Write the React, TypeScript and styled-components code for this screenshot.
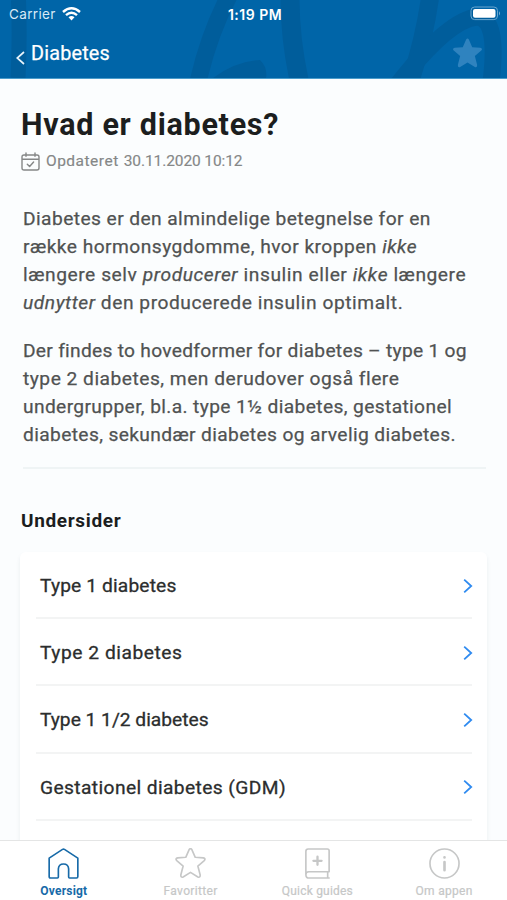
import React from "react";
import styled, { createGlobalStyle, css } from "styled-components";

const GlobalStyle = createGlobalStyle`
  html, body { margin: 0; padding: 0; background: #fbfdfe; }
  *, *::before, *::after { box-sizing: border-box; }
`;

const Screen = styled.div`
  width: 507px;
  height: 900px;
  display: flex;
  flex-direction: column;
  overflow: hidden;
  background: #fbfdfe;
  font-family: Roboto, "Noto Sans", sans-serif;
`;

const Header = styled.header`
  position: relative;
  flex: none;
  height: 79px;
  background: #0065a8;
  border-bottom: 1px solid #4a9ccb;
  color: #fff;
`;

const Pattern = styled.svg`
  position: absolute;
  inset: 0;
`;

const StatusBar = styled.div`
  position: relative;
  display: grid;
  grid-template-columns: 1fr auto 1fr;
  align-items: center;
  height: 28px;
  padding: 0 6px 0 9px;
  font-family: Inter, sans-serif;
  font-size: 13.5px;
`;

const Carrier = styled.div`
  display: flex;
  align-items: center;
  gap: 6px;
  color: #d8eaf6;
  letter-spacing: 0.35px;
`;

const Clock = styled.div`
  font-weight: 600;
  font-size: 14px;
  letter-spacing: 0.5px;
`;

const Battery = styled.svg`
  justify-self: end;
  margin-top: -2px;
`;

const NavBar = styled.div`
  position: relative;
  display: flex;
  align-items: center;
  height: 50px;
  padding: 0 24px 0 16px;
`;

const BackIcon = styled.svg`
  margin-top: 10px;
`;

const NavTitle = styled.div`
  flex: 1;
  margin: 0 0 0 6px;
  font-size: 19.8px;
  letter-spacing: 0.2px;
  -webkit-text-stroke: 0.25px currentColor;
`;

const Content = styled.main`
  flex: 1;
  min-height: 0;
  overflow: hidden;
  padding: 28px 20px 0;
`;

const Line = styled.span<{ $spacing: number }>`
  display: block;
  white-space: nowrap;
  letter-spacing: ${(p) => p.$spacing}px;
`;

const Title = styled.h1`
  margin: 0 0 0 1px;
  font-size: 30.5px;
  line-height: 36px;
  font-weight: 700;
  letter-spacing: 0.72px;
  color: #1c1e1e;
`;

const Updated = styled.div`
  display: flex;
  align-items: center;
  height: 20px;
  margin: 8px 0 0 1px;
  font-size: 15.5px;
  color: #858787;
  -webkit-text-stroke: 0.15px currentColor;
`;

const UpdatedLabel = styled.span`
  margin: 0 5px 0 6px;
  letter-spacing: 0.5px;
`;

const Article = styled.div`
  margin: 34px 1px 0 3px;
  padding-bottom: 18px;
  border-bottom: 2px solid #eff4f5;
`;

const Paragraph = styled.p`
  margin: 0;
  font-size: 19.2px;
  line-height: 28px;
  color: #505252;
  -webkit-text-stroke: 0.25px currentColor;
  & + & { margin-top: 20px; }
`;

const SectionTitle = styled.h2`
  margin: 40px 0 0 1px;
  font-size: 19px;
  line-height: 24px;
  font-weight: 700;
  letter-spacing: 0.65px;
  color: #1c1e1e;
`;

const Card = styled.div`
  height: 340px;
  margin-top: 19px;
  padding: 0 15px 0 16px;
  border-radius: 6px;
  background: #fff;
  box-shadow: 0 3px 4px rgba(40, 70, 90, 0.08);
`;

const Row = styled.div`
  display: flex;
  align-items: center;
  justify-content: space-between;
  height: 67.2px;
  padding: 2px 0 0 4px;
  border-bottom: 2px solid #f3f4f4;
  font-size: 19.2px;
  color: #2b2d2d;
  -webkit-text-stroke: 0.3px currentColor;
`;

const Chevron = styled.svg`
  margin-right: -1px;
`;

const TabBar = styled.nav`
  flex: none;
  display: grid;
  grid-template-columns: repeat(4, 1fr);
  height: 60px;
  padding-top: 7px;
  border-top: 1px solid #e4e5e5;
  background: #fff;
`;

const Tab = styled.div<{ $active?: boolean; $spacing: number }>`
  display: flex;
  flex-direction: column;
  align-items: center;
  gap: 4px;
  padding-left: 1px;
  color: #c6c7c7;
  font-size: 12px;
  line-height: 14px;
  letter-spacing: ${(p) => p.$spacing}px;
  -webkit-text-stroke: 0.2px currentColor;
  ${(p) => p.$active && css`
    color: #176aa8;
    font-weight: 700;
    -webkit-text-stroke: 0;
  `}
`;

const Glyph = styled.svg`
  display: block;
  fill: none;
  stroke: currentColor;
  stroke-width: 1.7;
  stroke-linejoin: round;
  stroke-linecap: round;
`;

const TabGlyph = styled(Glyph)`
  height: 31px;
  width: 31px;
  margin-bottom: 1px;
`;

const starPath =
  "M14.6 1.6Q16 -0.4 17.4 1.6L20.9 9.6L29.2 10.2Q32 10.8 30.2 13L23.6 18.6L26 27.8Q26 31 23.6 29.9L16 25.2L8.4 29.9Q6 31 6 27.8L8.4 18.6L1.8 13Q0 10.8 2.8 10.2L11.1 9.6Z";

const pages = [
  { name: "Type 1 diabetes", spacing: 0.14 },
  { name: "Type 2 diabetes", spacing: 0.54 },
  { name: "Type 1 1/2 diabetes", spacing: 0 },
  { name: "Gestationel diabetes (GDM)", spacing: 0.4 },
];

const tabs = [
  {
    label: "Oversigt",
    spacing: 0.2,
    active: true,
    icon: <path d="M1.2 10.5L15 1.4Q16 0.8 17 1.4L30.8 10.5V29.5Q30.8 31 29.5 31H22.3Q21.3 31 21.3 30V21.5Q21 16.5 16 16.5T10.7 21.5V30Q10.7 31 9.7 31H2.5Q1.2 31 1.2 29.5Z" />,
  },
  { label: "Favoritter", spacing: 0.35, icon: <path d={starPath} /> },
  {
    label: "Quick guides",
    spacing: 0.2,
    icon: (
      <>
        <path d="M28 24.5V2.8Q28 1 26.2 1H6.3Q4 1 4 3.5V27.5Q4 31 7.5 31H28M4 27.5Q4 24.5 7 24.5H28M26.5 24.5V31" />
        <path d="M16 9V17.4M11.8 13.2H20.2" strokeWidth="2.4" />
      </>
    ),
  },
  {
    label: "Om appen",
    spacing: 0.3,
    icon: (
      <>
        <circle cx="16" cy="16" r="15" />
        <path d="M16 14.5V23M16 9.5V9.7" strokeWidth="2.7" />
      </>
    ),
  },
];

export default function App() {
  return (
    <Screen>
      <GlobalStyle />
      <Header>
        <Pattern width="507" height="78" viewBox="0 0 507 78" fill="none" stroke="#005d9b">
          <path d="M18.5 0Q20 40 18 78" strokeWidth="15" />
          <path d="M229 -4Q209 34 198 82" strokeWidth="17" />
          <path d="M213 78Q236 61 260 60Q268 68 266 78Z" fill="#005d9b" stroke="none" />
          <path d="M290 -2Q290 38 299 80" strokeWidth="19" />
          <path d="M430 -2Q424 40 410 82" strokeWidth="18" />
          <path d="M398 84Q448 20 477 17Q499 18 491 82" strokeWidth="17" />
        </Pattern>
        <StatusBar>
          <Carrier>
            Carrier
            <svg width="19" height="14" viewBox="0 0 19 14" fill="none" stroke="#fff" strokeWidth="2.4">
              <path d="M1 5Q9.5 -2.5 18 5M4 8.2Q9.5 3.3 15 8.2" />
              <path d="M6.5 10.2Q9.5 7.6 12.5 10.2L9.5 13.5Z" fill="#fff" stroke="none" />
            </svg>
          </Carrier>
          <Clock>1:19 PM</Clock>
          <Battery width="31" height="15" viewBox="0 0 31 15">
            <rect x="1" y="1" width="26.5" height="12.6" rx="3.6" fill="none" stroke="#69a6cf" strokeWidth="1" />
            <rect x="3" y="3" width="22.5" height="8.8" rx="2" fill="#fff" />
            <path d="M29 5.2Q31 7.3 29 9.4Z" fill="#78afd4" />
          </Battery>
        </StatusBar>
        <NavBar>
          <BackIcon width="9" height="14" viewBox="0 0 9 14" fill="none" stroke="#e8f4fb" strokeWidth="1.7">
            <path d="M8 1L1.2 7L8 13" />
          </BackIcon>
          <NavTitle>Diabetes</NavTitle>
          <svg width="31" height="30" viewBox="0 0 32 31" fill="#2f83bf">
            <path d={starPath} />
          </svg>
        </NavBar>
      </Header>
      <Content>
        <Title>Hvad er diabetes?</Title>
        <Updated>
          <Glyph width="19" height="19" viewBox="0 0 19 19">
            <path d="M1 5Q1 3 3 3H16Q18 3 18 5V16Q18 18 16 18H3Q1 18 1 16ZM1 7.3H18M5 1V4.3M14 1V4.3M6.3 12.2L8.6 14.5L12.6 10" strokeWidth="1.4" />
          </Glyph>
          <UpdatedLabel>Opdateret</UpdatedLabel>
          <Line $spacing={-0.1}>30.11.2020 10:12</Line>
        </Updated>
        <Article>
          <Paragraph>
            <Line $spacing={0.42}>Diabetes er den almindelige betegnelse for en</Line>
            <Line $spacing={0.46}>række hormonsygdomme, hvor kroppen <em>ikke</em></Line>
            <Line $spacing={0.56}>længere selv <em>producerer</em> insulin eller <em>ikke</em> længere</Line>
            <Line $spacing={0.54}><em>udnytter</em> den producerede insulin optimalt.</Line>
          </Paragraph>
          <Paragraph>
            <Line $spacing={0.28}>Der findes to hovedformer for diabetes – type 1 og</Line>
            <Line $spacing={0.5}>type 2 diabetes, men derudover også flere</Line>
            <Line $spacing={0.37}>undergrupper, bl.a. type 1½ diabetes, gestationel</Line>
            <Line $spacing={0.37}>diabetes, sekundær diabetes og arvelig diabetes.</Line>
          </Paragraph>
        </Article>
        <SectionTitle>Undersider</SectionTitle>
        <Card>
          {pages.map((page) => (
            <Row key={page.name}>
              <Line $spacing={page.spacing}>{page.name}</Line>
              <Chevron width="10" height="16" viewBox="0 0 10 16" fill="none" stroke="#2f8bf0" strokeWidth="1.8">
                <path d="M1.2 1.7L8.2 8L1.2 14.3" />
              </Chevron>
            </Row>
          ))}
        </Card>
      </Content>
      <TabBar>
        {tabs.map((tab) => (
          <Tab key={tab.label} $active={tab.active} $spacing={tab.spacing}>
            <TabGlyph viewBox="0 0 32 32">{tab.icon}</TabGlyph>
            {tab.label}
          </Tab>
        ))}
      </TabBar>
    </Screen>
  );
}
